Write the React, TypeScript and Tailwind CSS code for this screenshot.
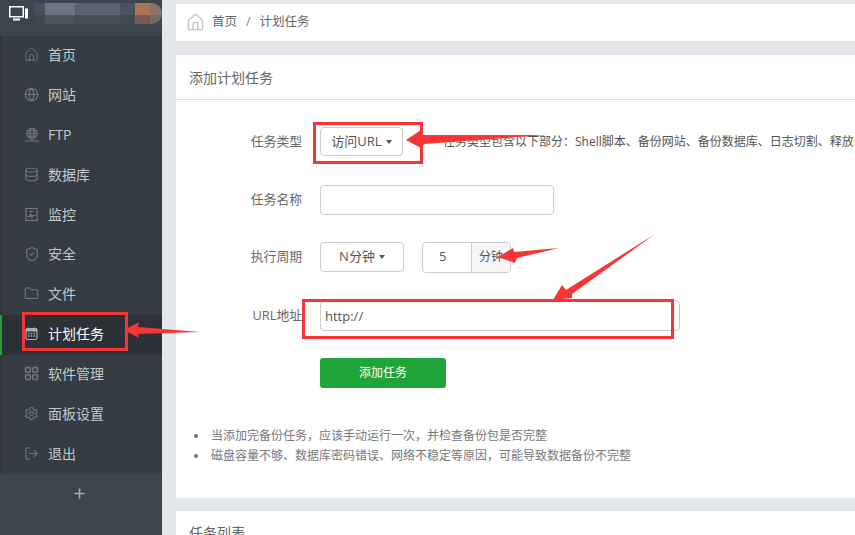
import React from "react";
import { House, Globe, Database, ShieldCheck, Folder, Settings, LogOut, Plus } from "lucide-react";

const FtpIcon = () => (
  <svg width="16" height="16" viewBox="0 0 16 16" fill="none" stroke="currentColor" strokeWidth="1.2">
    <circle cx="8" cy="6.5" r="5.2" />
    <ellipse cx="8" cy="6.5" rx="2.3" ry="5.2" />
    <path d="M2.8 6.5h10.4M3.8 4h8.4M3.8 9h8.4M8 11.7v2M1 14h14" />
  </svg>
);

const MonitorIcon = () => (
  <svg width="15" height="15" viewBox="0 0 15 15" fill="none" stroke="currentColor" strokeWidth="1.2">
    <rect x="2" y="1.5" width="11" height="12" />
    <path d="M3.5 9.5h2.3l1-2.5 1 3.5 1-2h2.7M5 4.5h5" />
  </svg>
);

const CalendarIcon = () => (
  <svg width="15" height="15" viewBox="0 0 15 15" fill="none">
    <rect x="2" y="2.5" width="11" height="11" rx="1.5" stroke="currentColor" strokeWidth="1.2" />
    <rect x="2" y="2.5" width="11" height="3" fill="currentColor" />
    <path d="M4.5 1.5v2M10.5 1.5v2" stroke="currentColor" strokeWidth="1.2" />
    <path d="M4 7.5h1.5M6.8 7.5h1.5M9.6 7.5h1.5M4 10h1.5M6.8 10h1.5M9.6 10h1.5" stroke="currentColor" strokeWidth="1.3" />
  </svg>
);

const GridIcon = () => (
  <svg width="15" height="15" viewBox="0 0 15 15" fill="none" stroke="currentColor" strokeWidth="1.5">
    <rect x="1.5" y="1.5" width="4.8" height="4.8" rx="1" />
    <rect x="8.7" y="1.5" width="4.8" height="4.8" rx="1" />
    <rect x="1.5" y="8.7" width="4.8" height="4.8" rx="1" />
    <rect x="8.7" y="8.7" width="4.8" height="4.8" rx="1" />
  </svg>
);

const items: { label: string; icon: React.ReactNode; active?: boolean }[] = [
  { label: "首页", icon: <House size={15} strokeWidth={1.6} /> },
  { label: "网站", icon: <Globe size={15} strokeWidth={1.8} /> },
  { label: "FTP", icon: <FtpIcon /> },
  { label: "数据库", icon: <Database size={15} strokeWidth={1.8} /> },
  { label: "监控", icon: <MonitorIcon /> },
  { label: "安全", icon: <ShieldCheck size={16} strokeWidth={1.6} /> },
  { label: "文件", icon: <Folder size={15} strokeWidth={1.7} /> },
  { label: "计划任务", icon: <CalendarIcon />, active: true },
  { label: "软件管理", icon: <GridIcon /> },
  { label: "面板设置", icon: <Settings size={15} strokeWidth={1.9} /> },
  { label: "退出", icon: <LogOut size={15} strokeWidth={1.8} /> },
];

const Caret = () => <span className="ml-[4px] inline-block h-0 w-0 border-x-[3.5px] border-t-4 border-x-transparent border-t-[#555]" />;

const Label = ({ children }: { children: React.ReactNode }) => (
  <div className="w-[126px] shrink-0 text-right text-[12.8px] text-[#666]">{children}</div>
);

export default function App() {
  return (
    <div
      className="relative flex h-[535px] w-[855px] overflow-hidden bg-[#e4e8ed]"
      style={{ fontFamily: '"Open Sans","Noto Sans CJK SC",sans-serif' }}
    >
      <aside className="flex w-[162px] shrink-0 flex-col bg-[#3c444d]">
        <div className="flex h-[36px] items-start pl-[9px] pt-[5px]">
          <svg width="20" height="15" viewBox="0 0 20 15" fill="none" className="mt-[1px] shrink-0">
            <rect x="0.75" y="0.75" width="13.5" height="10" stroke="#fff" strokeWidth="1.5" />
            <path d="M4 13.5h7" stroke="#fff" strokeWidth="2" />
            <rect x="16" y="2.5" width="3" height="10" fill="#fff" />
          </svg>
          <div className="-mt-[2px] ml-[5px] flex h-[21px] w-[128px] flex-col overflow-hidden rounded-r-full rounded-l-[10px]">
            <div className="flex h-[12px]">
              <div className="w-[11px] bg-[#47505a]" />
              <div className="w-[30px] bg-[#6b747f]" />
              <div className="w-[45px] bg-[#5a636d]" />
              <div className="w-[15px] bg-[#4a535d]" />
              <div className="w-[15px] bg-[#ab7459]" />
              <div className="w-[12px] bg-[#8b7468]" />
            </div>
            <div className="flex h-[9px]">
              <div className="w-[11px] bg-[#3f4750]" />
              <div className="w-[30px] bg-[#4c555f]" />
              <div className="w-[45px] bg-[#464f58]" />
              <div className="w-[15px] bg-[#414952]" />
              <div className="w-[15px] bg-[#7a5a4c]" />
              <div className="w-[12px] bg-[#776b65]" />
            </div>
          </div>
        </div>
        <nav className="flex h-[438px] flex-col bg-[#353c44]">
          {items.map((it) => (
            <div
              key={it.label}
              className={`flex flex-1 items-center border-l-2 pb-[2px] pl-[22px] text-[14px] ${
                it.active ? "border-[#20a53a] bg-[#2c3138] text-white" : "border-[#2f353b] text-[#c3c8cc]"
              }`}
            >
              <span className={`flex w-[24px] shrink-0 ${it.active ? "text-[#a9adb1]" : "text-[#70767b]"}`}>{it.icon}</span>
              {it.label}
            </div>
          ))}
        </nav>
        <div className="flex flex-1 items-start justify-center pr-[4px] pt-[12px] text-[#a7abaf]">
          <Plus size={15} strokeWidth={2.6} />
        </div>
      </aside>

      <main className="min-w-0 flex-1 pl-[14px] pt-[4px]">
        <div className="flex h-[37px] items-center bg-white pl-[10px] text-[12.5px] text-[#666]">
          <House size={19} strokeWidth={1.8} className="text-[#c4c4c4]" />
          <span className="ml-[7px]">首页</span>
          <span className="mx-[9px] text-[#888]">/</span>
          <span>计划任务</span>
        </div>

        <section className="mt-[14px] h-[443px] bg-white">
          <div className="flex h-[45px] items-center border-b border-[#ddd] pl-[13px] text-[14px] text-[#666]">添加计划任务</div>

          <div className="flex flex-col pt-[27px]">
            <div className="flex h-[29px] items-center gap-[18px] whitespace-nowrap">
              <Label>任务类型</Label>
              <button className="flex h-[29px] w-[83px] shrink-0 items-center justify-center rounded-[4px] border border-[#ccc] text-[13px] text-[#555]">
                访问URL
                <Caret />
              </button>
              <span className="ml-[22px] text-[12px] text-[#555]">任务类型包含以下部分：Shell脚本、备份网站、备份数据库、日志切割、释放内存、访问URL</span>
            </div>

            <div className="mt-[29px] flex h-[30px] items-center gap-[18px]">
              <Label>任务名称</Label>
              <input readOnly className="h-[30px] w-[234px] rounded-[4px] border border-[#ccc] bg-white" />
            </div>

            <div className="mt-[27px] flex h-[30px] items-center gap-[18px]">
              <Label>执行周期</Label>
              <button className="flex h-[30px] w-[84px] items-center justify-center rounded-[4px] border border-[#ccc] text-[13px] text-[#555]">
                N分钟
                <Caret />
              </button>
              <div className="flex h-[31px] w-[89px] overflow-hidden rounded-[4px] border border-[#ccc]">
                <div className="flex w-[48px] items-center pl-[16px] text-[13px] text-[#555]">5</div>
                <div className="flex flex-1 items-center justify-center border-l border-[#ccc] bg-[#f5f5f5] text-[12px] text-[#555]">分钟</div>
              </div>
            </div>

            <div className="mt-[28px] flex h-[31px] items-center gap-[18px]">
              <Label>URL地址</Label>
              <input
                readOnly
                value="http://"
                className="h-[31px] w-[360px] rounded-[4px] border border-[#ccc] bg-white px-[4px] text-[13px] text-[#555] outline-none"
              />
            </div>

            <div className="mt-[27px] pl-[144px]">
              <button className="h-[30px] w-[126px] rounded-[3px] bg-[#20a53a] text-[12px] text-white">添加任务</button>
            </div>

            <ul className="mt-[42px] flex flex-col gap-[8px] pl-[18px] text-[12px] leading-[12px] text-[#777]">
              <li className="flex items-center">
                <span className="mr-[13px] h-[4px] w-[4px] rounded-full bg-[#777]" />
                当添加完备份任务，应该手动运行一次，并检查备份包是否完整
              </li>
              <li className="flex items-center">
                <span className="mr-[13px] h-[4px] w-[4px] rounded-full bg-[#777]" />
                磁盘容量不够、数据库密码错误、网络不稳定等原因，可能导致数据备份不完整
              </li>
            </ul>
          </div>
        </section>

        <section className="mt-[13px] h-[60px] bg-white pl-[13px] pt-[11px] text-[14px] text-[#666]">任务列表</section>
      </main>

      {/* annotations drawn over the screenshot */}
      <div className="absolute left-[22px] top-[312px] h-[39px] w-[106px] border-[3px] border-[#f73535]" />
      <div className="absolute left-[313px] top-[122px] h-[42px] w-[110px] border-[3px] border-[#f73535]" />
      <div className="absolute left-[302px] top-[299px] h-[40px] w-[372px] border-[3px] border-[#f73535]" />
      <svg className="absolute left-0 top-0" width="855" height="535" fill="#f73535">
        <polygon points="124,330 139,322 138,327 200,332 138,334 139,338" />
        <polygon points="406,140 421,130 421,135 547,135 424,144 421,148" />
        <polygon points="498,257 513,248 514,252 559,248 517,258 515,263" />
        <polygon points="553,300 562,285 566,290 655,234 572,294 572,298" />
      </svg>
    </div>
  );
}
